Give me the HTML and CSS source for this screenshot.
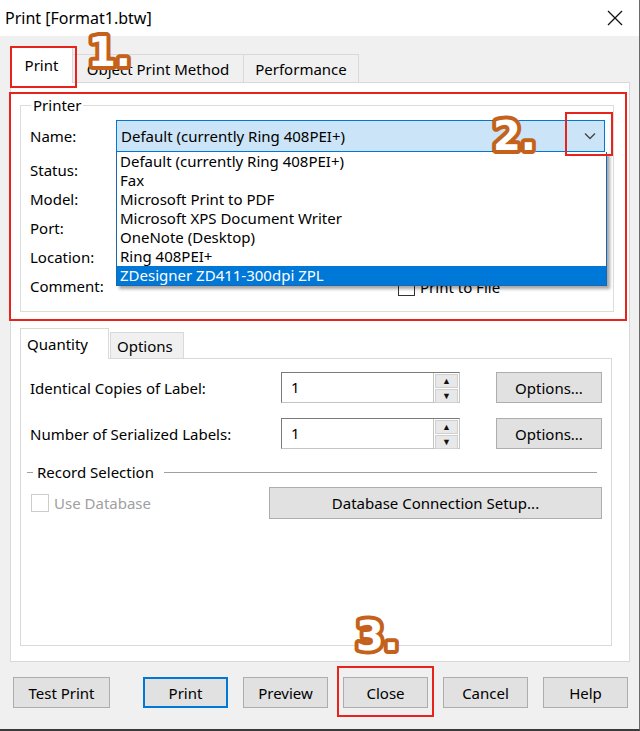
FILE: index.html
```html
<!DOCTYPE html>
<html lang="en">
<head>
  <meta charset="UTF-8">
  <meta name="viewport" content="width=device-width, initial-scale=1.0">
  <title>Print [Format1.btw]</title>
  <link rel="stylesheet" href="styles.css">
</head>
<body>
  <div class="window">
    <div class="titlebar">
      <span class="title">Print [Format1.btw]</span>
      <svg class="close-x" width="16" height="16" viewBox="0 0 16 16">
        <path d="M1 1 L15 15 M15 1 L1 15" stroke="#111" stroke-width="1.3" fill="none"/>
      </svg>
    </div>

    <div class="content">
      <div class="tabs">
        <div class="tab active tab-print">Print</div>
        <div class="tab tab-object">Object Print Method</div>
        <div class="tab tab-perf">Performance</div>
      </div>

      <div class="panel">
        <fieldset class="group">
          <legend>Printer</legend>
          <div class="field name-row">
            <span class="label">Name:</span>
            <div class="combo">
              <div class="combo-box">
                <span>Default (currently Ring 408PEI+)</span>
                <svg class="chevron" width="12" height="8" viewBox="0 0 12 8">
                  <path d="M1 1.5 L6 6.5 L11 1.5" stroke="#444" stroke-width="1.3" fill="none"/>
                </svg>
              </div>
              <ul class="combo-list">
                <li>Default (currently Ring 408PEI+)</li>
                <li>Fax</li>
                <li>Microsoft Print to PDF</li>
                <li>Microsoft XPS Document Writer</li>
                <li>OneNote (Desktop)</li>
                <li>Ring 408PEI+</li>
                <li class="selected">ZDesigner ZD411-300dpi ZPL</li>
              </ul>
            </div>
          </div>
          <div class="field"><span class="label">Status:</span></div>
          <div class="field"><span class="label">Model:</span></div>
          <div class="field"><span class="label">Port:</span></div>
          <div class="field"><span class="label">Location:</span></div>
          <div class="field">
            <span class="label">Comment:</span>
            <span class="check print-file"><span class="box"></span>Print to File</span>
          </div>
        </fieldset>

        <div class="subtabs">
          <div class="subtab active">Quantity</div>
          <div class="subtab">Options</div>
        </div>
        <div class="subpanel">
          <div class="qty-row">
            <span class="qty-label">Identical Copies of Label:</span>
            <div class="spin">
              <span class="spin-value">1</span>
              <div class="spin-btns">
                <span class="spin-btn">&#9650;</span>
                <span class="spin-btn">&#9660;</span>
              </div>
            </div>
            <button class="btn options-btn">Options...</button>
          </div>
          <div class="qty-row">
            <span class="qty-label">Number of Serialized Labels:</span>
            <div class="spin">
              <span class="spin-value">1</span>
              <div class="spin-btns">
                <span class="spin-btn">&#9650;</span>
                <span class="spin-btn">&#9660;</span>
              </div>
            </div>
            <button class="btn options-btn">Options...</button>
          </div>
          <div class="section-title"><span>Record Selection</span></div>
          <div class="db-row">
            <span class="check disabled"><span class="box"></span>Use Database</span>
            <button class="btn db-btn">Database Connection Setup...</button>
          </div>
        </div>
      </div>

      <div class="buttons">
        <button class="btn test-btn">Test Print</button>
        <button class="btn default-btn">Print</button>
        <button class="btn">Preview</button>
        <button class="btn">Close</button>
        <button class="btn">Cancel</button>
        <button class="btn">Help</button>
      </div>
    </div>

    <!-- tutorial markers -->
    <div class="mark mark-tab"></div>
    <div class="mark mark-group"></div>
    <div class="mark mark-arrow"></div>
    <div class="mark mark-close"></div>

    <svg class="step step-1" width="64" height="54" viewBox="0 0 64 54">
      <text x="5" y="41">1.</text>
    </svg>
    <svg class="step step-2" width="64" height="54" viewBox="0 0 64 54">
      <text x="5" y="41">2.</text>
    </svg>
    <svg class="step step-3" width="64" height="54" viewBox="0 0 64 54">
      <text x="5" y="41">3.</text>
    </svg>
  </div>
</body>
</html>
```

FILE: styles.css
```css
body {
  margin: 0;
  font-family: "Noto Sans", "Open Sans", sans-serif;
  font-size: 15px;
  color: #000;
  background: #fff;
}

.window {
  position: relative;
  width: 639px;
  height: 729px;
  background: #f0f0f0;
  border-right: 1px solid #6a6a6a;
  border-bottom: 2px solid #3a3a3a;
  overflow: hidden;
}

.titlebar {
  height: 36px;
  background: #fff;
  display: flex;
  align-items: center;
  justify-content: space-between;
  padding: 0 16px 0 5px;
}

.title {
  font-size: 16px;
}

.content {
  padding: 12px 0 0 10px;
}

/* main tabs */
.tabs {
  display: flex;
  align-items: flex-end;
  height: 34px;
  padding-left: 1px;
}

.tab {
  height: 28px;
  border: 1px solid #d9d9d9;
  border-bottom: none;
  background: #f0f0f0;
  display: flex;
  align-items: center;
  justify-content: center;
  margin-left: -1px;
  box-sizing: border-box;
}

.tab.active {
  height: 36px;
  background: #fff;
  position: relative;
  z-index: 1;
  margin-bottom: -1px;
  padding-bottom: 2px;
}

.tab-print { width: 63px; }
.tab-object { width: 172px; }
.tab-perf { width: 116px; }

.panel {
  width: 620px;
  height: 580px;
  box-sizing: border-box;
  background: #fff;
  border: 1px solid #d9d9d9;
  padding: 12px 0 0 9px;
}

/* printer group */
.group {
  width: 594px;
  margin: 0;
  padding: 5px 0 11px 9px;
  box-sizing: border-box;
  border: 1px solid #dcdcdc;
}

.group legend {
  padding: 0 2px;
  margin-left: 1px;
  line-height: 20px;
}

.field {
  display: flex;
  align-items: center;
  height: 29px;
}

.field.name-row {
  height: 32px;
  margin-bottom: 3px;
}

.label {
  width: 86px;
  flex-shrink: 0;
}

.combo {
  position: relative;
  width: 489px;
  height: 32px;
}

.combo-box {
  height: 100%;
  box-sizing: border-box;
  background: #cce4f7;
  border: 1px solid #0078d7;
  display: flex;
  align-items: center;
  justify-content: space-between;
  padding: 0 8px 0 4px;
}

.combo-list {
  position: absolute;
  left: 0;
  top: 32px;
  width: 491px;
  margin: 0;
  padding: 0;
  list-style: none;
  background: #fff;
  border: 1px solid #1a66b0;
  border-top: none;
  box-sizing: border-box;
  box-shadow: 3px 3px 3px rgba(0, 0, 0, 0.35);
  z-index: 5;
}

.combo-list li {
  height: 19px;
  line-height: 19px;
  padding-left: 3px;
}

.combo-list li.selected {
  background: #0078d7;
  color: #fff;
}

.check {
  display: flex;
  align-items: center;
}

.check .box {
  width: 15px;
  height: 15px;
  border: 1px solid #333;
  background: #fff;
  margin-right: 5px;
}

.print-file {
  margin-left: 282px;
  margin-top: 3px;
}

/* quantity tabs */
.subtabs {
  display: flex;
  align-items: flex-end;
  height: 30px;
  margin-top: 16px;
}

.subtab {
  height: 26px;
  padding: 0 6px;
  border: 1px solid #d9d9d9;
  border-bottom: none;
  background: #f0f0f0;
  display: flex;
  align-items: center;
  box-sizing: border-box;
  margin-left: -1px;
  width: 74px;
}

.subtab.active {
  height: 31px;
  width: 89px;
  margin-left: 0;
  margin-right: 2px;
  background: #fff;
  position: relative;
  z-index: 1;
  margin-bottom: -1px;
}

.subpanel {
  width: 592px;
  height: 288px;
  box-sizing: border-box;
  border: 1px solid #d9d9d9;
  padding: 13px 9px 0 9px;
}

.qty-row {
  display: flex;
  align-items: center;
  height: 31px;
  margin-bottom: 15px;
}

.qty-label {
  width: 251px;
}

.spin {
  display: flex;
  width: 179px;
  height: 31px;
  box-sizing: border-box;
  border: 1px solid #7a7a7a;
  border-right-color: #c4c4c4;
  border-bottom-color: #c4c4c4;
  background: #fff;
}

.spin-value {
  flex: 1;
  padding-left: 9px;
  line-height: 29px;
  border-right: 1px solid #c4c4c4;
}

.spin-btns {
  width: 23px;
  display: flex;
  flex-direction: column;
  gap: 1px;
  padding: 1px;
}

.spin-btn {
  flex: 1;
  background: #e8e8e8;
  border: 1px solid #d0d0d0;
  font-size: 9px;
  line-height: 12px;
  text-align: center;
  color: #111;
}

.btn {
  font-family: inherit;
  font-size: 15px;
  color: #000;
  background: #e1e1e1;
  border: 1px solid #adadad;
  height: 31px;
  padding: 0;
  box-sizing: border-box;
}

.options-btn {
  width: 106px;
  margin-left: 36px;
}

.section-title {
  display: flex;
  align-items: center;
  height: 22px;
  margin: -3px 5px 0 -3px;
}

.section-title::before {
  content: "";
  width: 6px;
  border-top: 1px solid #a0a0a0;
  margin-right: 4px;
}

.section-title::after {
  content: "";
  flex: 1;
  border-top: 1px solid #a0a0a0;
  margin-left: 10px;
}

.db-row {
  display: flex;
  align-items: center;
  justify-content: space-between;
  height: 32px;
  margin-top: 4px;
}

.check.disabled {
  color: #a0a0a0;
  margin-left: 1px;
}

.check.disabled .box {
  border-color: #cccccc;
  width: 16px;
  height: 16px;
}

.db-btn {
  width: 333px;
  height: 32px;
}

/* bottom buttons */
.buttons {
  display: flex;
  margin-top: 15px;
  padding-left: 3px;
  gap: 15px;
}

.buttons .btn {
  width: 85px;
}

.buttons .test-btn {
  width: 97px;
  margin-right: 18px;
}

.buttons .default-btn {
  border: 2px solid #0078d7;
}

/* tutorial overlays */
.mark {
  position: absolute;
  border: 2px solid #e8231b;
  box-sizing: border-box;
  z-index: 10;
}

.mark-tab { left: 10px; top: 46px; width: 67px; height: 42px; }
.mark-group { left: 9px; top: 92px; width: 618px; height: 229px; }
.mark-arrow { left: 565px; top: 112px; width: 48px; height: 44px; }
.mark-close { left: 337px; top: 666px; width: 97px; height: 51px; }

.step {
  position: absolute;
  z-index: 11;
}

.step text {
  font-family: "DejaVu Sans", sans-serif;
  font-weight: bold;
  font-size: 40px;
  fill: #fff;
  stroke: #c4611b;
  stroke-width: 8px;
  stroke-linejoin: round;
  paint-order: stroke;
}

.step-1 { left: 83px; top: 25px; }
.step-2 { left: 488px; top: 109px; }
.step-3 { left: 351px; top: 609px; }
```
